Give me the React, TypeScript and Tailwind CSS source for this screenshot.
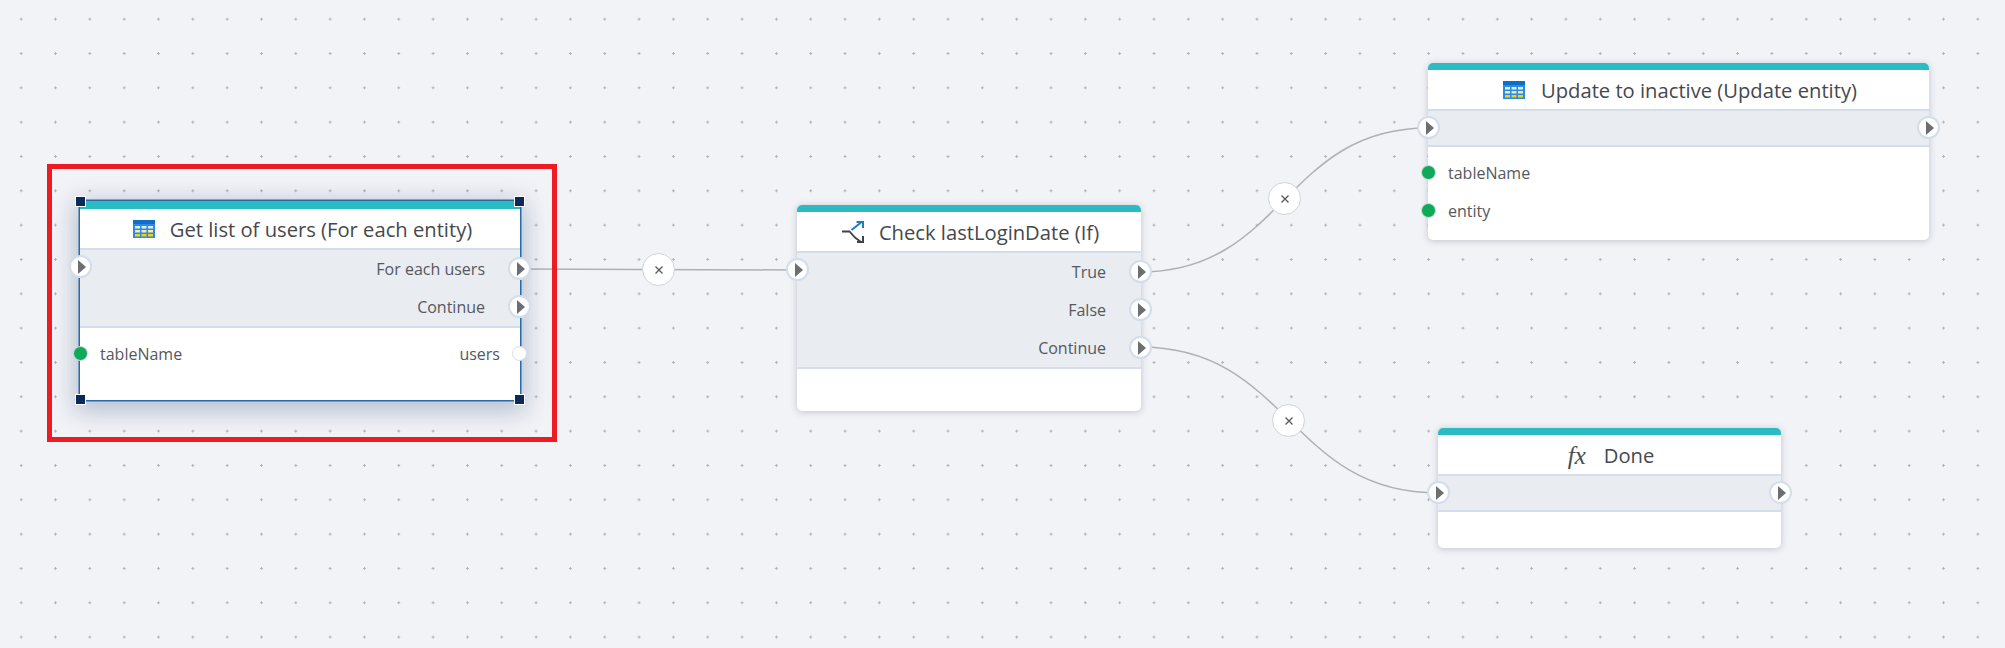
import type { ReactNode } from "react";

function TableIcon() {
  return (
    <svg width="22" height="18" viewBox="0 0 22 18" className="shrink-0">
      <rect width="22" height="18" fill="#2a8be0" />
      <rect width="22" height="4" fill="#0f6fc6" />
      <rect x="2" y="6" width="5" height="2.5" fill="#dcecfb" />
      <rect x="8.5" y="6" width="5" height="2.5" fill="#dcecfb" />
      <rect x="15" y="6" width="5" height="2.5" fill="#dcecfb" />
      <rect x="2" y="10" width="5" height="2.5" fill="#f3e9a8" />
      <rect x="8.5" y="10" width="5" height="2.5" fill="#f3e9a8" />
      <rect x="15" y="10" width="5" height="2.5" fill="#f3e9a8" />
      <rect x="2" y="14" width="5" height="2.5" fill="#f2cf1d" />
      <rect x="8.5" y="14" width="5" height="2.5" fill="#f2cf1d" />
      <rect x="15" y="14" width="5" height="2.5" fill="#f2cf1d" />
    </svg>
  );
}

function BranchIcon() {
  return (
    <svg width="22" height="22" viewBox="0 0 22 22" fill="none" className="shrink-0">
      <path d="M0 10.5H7.5L13 16.5L19 21" stroke="#3f4347" strokeWidth="1.8" />
      <path d="M15 21H21V15" stroke="#3f4347" strokeWidth="2" />
      <path d="M9.5 9L19 1.5" stroke="#1f7fb8" strokeWidth="2" />
      <path d="M14.5 1H21V7" stroke="#1f7fb8" strokeWidth="2" />
    </svg>
  );
}

function FxIcon() {
  return (
    <span className="font-['Liberation_Serif',serif] text-[25px] italic leading-none text-[#4a4d52]">
      fx
    </span>
  );
}

// flow port: white disc with a grey arrow
function Port({ className }: { className: string }) {
  return (
    <div
      className={`absolute z-10 flex h-[23px] w-[23px] items-center justify-center rounded-full border-2 border-[#d3deea] bg-white ${className}`}
    >
      <div className="ml-[3px] h-0 w-0 border-y-[7px] border-l-[8px] border-y-transparent border-l-[#6b6e73]" />
    </div>
  );
}

function DataDot({ filled, className }: { filled: boolean; className: string }) {
  return (
    <div
      className={`absolute z-10 h-[15px] w-[15px] rounded-full border border-[#d3deea] ${
        filled ? "bg-[#0fa958]" : "bg-white"
      } ${className}`}
    />
  );
}

function FlowRow({ label }: { label: string }) {
  return (
    <div className="relative flex h-[38px] items-center justify-end pr-[35px]">
      <span className="text-[16px] text-[#55585d]">{label}</span>
      <Port className="right-[-11px] top-[7px]" />
    </div>
  );
}

function Node({
  className,
  title,
  icon,
  gap,
  band,
  selected,
  children,
}: {
  className: string;
  title: string;
  icon: ReactNode;
  gap: string;
  band: ReactNode;
  selected?: boolean;
  children?: ReactNode;
}) {
  return (
    <div
      className={`absolute flex flex-col bg-white ${
        selected
          ? "shadow-[0_0_0_1.5px_#2a6aa6,0_6px_22px_6px_rgba(70,95,130,0.33)]"
          : "rounded-[5px] shadow-[0_1px_7px_rgba(40,50,70,0.25)]"
      } ${className}`}
    >
      <div className={`bg-[#2abcc2] ${selected ? "h-[8px]" : "h-[7px] rounded-t-[5px]"}`} />
      <div className={`flex h-[39px] items-center justify-center pt-[1px] ${gap}`}>
        {icon}
        <span className="text-[20.2px] text-[#45484d]">{title}</span>
      </div>
      <div className="relative border-y-2 border-[#d3deea] bg-[#e9ecf1]">
        <Port className="left-[-11px] top-[5px]" />
        {band}
      </div>
      <div className="flex-1 pt-[7px]">{children}</div>
      {selected && (
        <>
          <Handle className="left-[-5px] top-[-5px]" />
          <Handle className="right-[-5px] top-[-5px]" />
          <Handle className="bottom-[-5px] left-[-5px]" />
          <Handle className="bottom-[-5px] right-[-5px]" />
        </>
      )}
    </div>
  );
}

function Handle({ className }: { className: string }) {
  return (
    <div className={`absolute z-20 h-[11px] w-[11px] border border-white bg-[#0b2a59] ${className}`} />
  );
}

function CloseButton({ className }: { className: string }) {
  return (
    <div
      className={`absolute z-10 flex h-[33px] w-[33px] items-center justify-center rounded-full border border-[#cfd3d8] bg-white ${className}`}
    >
      <svg width="10" height="10" viewBox="0 0 10 10" stroke="#55585d" strokeWidth="1.3">
        <path d="M1.5 1.5L8.5 8.5M8.5 1.5L1.5 8.5" />
      </svg>
    </div>
  );
}

export default function App() {
  return (
    <div className="relative h-[648px] w-full overflow-hidden bg-[#f2f3f7] bg-[radial-gradient(circle,#b0b2b7_1px,transparent_1.3px)] bg-[size:34.33px_34.33px] bg-[position:4px_2px] font-['Open_Sans',sans-serif]">
      {/* wires */}
      <svg className="absolute inset-0 h-full w-full" fill="none" stroke="#adb1b6" strokeWidth="1.5">
        <path d="M520 269L797 270" />
        <path d="M1140 272C1284 272 1284 128 1428 128" />
        <path d="M1140 347C1289 347 1289 493 1438 493" />
      </svg>
      <CloseButton className="left-[642px] top-[253px]" />
      <CloseButton className="left-[1268px] top-[182px]" />
      <CloseButton className="left-[1272px] top-[404px]" />

      {/* annotation frame */}
      <div className="absolute left-[47px] top-[164px] z-30 h-[278px] w-[510px] border-[5px] border-[#ed1c24]" />

      {/* Get list of users */}
      <Node
        selected
        className="left-[80px] top-[201px] h-[199px] w-[440px]"
        title="Get list of users (For each entity)"
        icon={<TableIcon />}
        gap="gap-[15px] pl-[5px]"
        band={
          <>
            <FlowRow label="For each users" />
            <FlowRow label="Continue" />
          </>
        }
      >
        <div className="relative flex h-[38px] items-center justify-between px-[20px]">
          <DataDot filled className="left-[-7px] top-[11px]" />
          <span className="text-[16px] text-[#55585d]">tableName</span>
          <span className="text-[16px] text-[#55585d]">users</span>
          <DataDot filled={false} className="right-[-7px] top-[11px]" />
        </div>
      </Node>

      {/* Check lastLoginDate */}
      <Node
        className="left-[797px] top-[205px] h-[206px] w-[344px]"
        title="Check lastLoginDate (If)"
        icon={<BranchIcon />}
        gap="gap-[15px] pl-[3px]"
        band={
          <>
            <FlowRow label="True" />
            <FlowRow label="False" />
            <FlowRow label="Continue" />
          </>
        }
      />

      {/* Update to inactive */}
      <Node
        className="left-[1428px] top-[63px] h-[177px] w-[501px]"
        title="Update to inactive (Update entity)"
        icon={<TableIcon />}
        gap="gap-[16px] pl-[3px]"
        band={
          <div className="relative h-[34px]">
            <Port className="right-[-11px] top-[5px]" />
          </div>
        }
      >
        <div className="relative flex h-[38px] items-center px-[20px]">
          <DataDot filled className="left-[-7px] top-[11px]" />
          <span className="text-[16px] text-[#55585d]">tableName</span>
        </div>
        <div className="relative flex h-[38px] items-center px-[20px]">
          <DataDot filled className="left-[-7px] top-[11px]" />
          <span className="text-[16px] text-[#55585d]">entity</span>
        </div>
      </Node>

      {/* Done */}
      <Node
        className="left-[1438px] top-[428px] h-[120px] w-[343px]"
        title="Done"
        icon={<FxIcon />}
        gap="gap-[18px] pl-[3px]"
        band={
          <div className="relative h-[34px]">
            <Port className="right-[-11px] top-[5px]" />
          </div>
        }
      />
    </div>
  );
}
